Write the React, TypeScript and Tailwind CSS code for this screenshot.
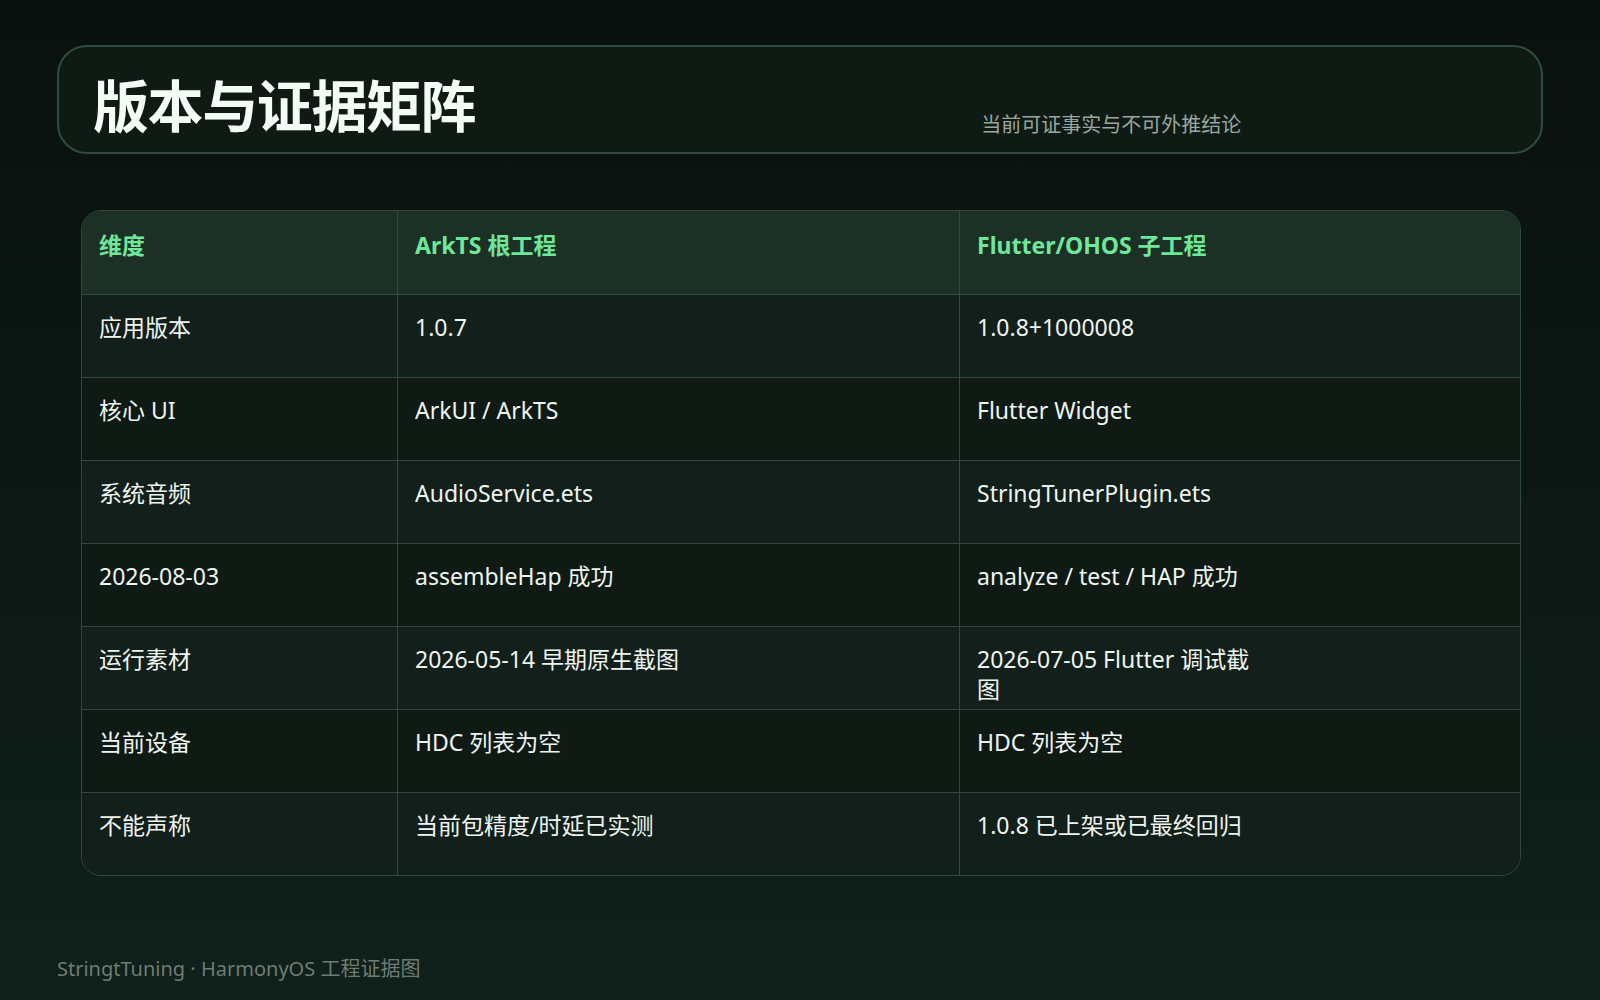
import React from "react";

const rows: [string, string, string][] = [
  ["应用版本", "1.0.7", "1.0.8+1000008"],
  ["核心 UI", "ArkUI / ArkTS", "Flutter Widget"],
  ["系统音频", "AudioService.ets", "StringTunerPlugin.ets"],
  ["2026-08-03", "assembleHap 成功", "analyze / test / HAP 成功"],
  ["运行素材", "2026-05-14 早期原生截图", "2026-07-05 Flutter 调试截图"],
  ["当前设备", "HDC 列表为空", "HDC 列表为空"],
  ["不能声称", "当前包精度/时延已实测", "1.0.8 已上架或已最终回归"],
];

export default function App() {
  return (
    <div
      className="w-[1600px] h-[1000px] flex flex-col bg-gradient-to-b from-[#09110e] to-[#10201a] text-[#eef5f0]"
      style={{ fontFamily: '"Noto Sans", "Noto Sans CJK SC", sans-serif' }}
    >
      <div className="mx-[57px] mt-[45px] h-[109px] rounded-[30px] border-2 border-[#2e4d3c] bg-[#0f1a15] flex items-start px-[34px]">
        <div className="text-[56px] font-bold leading-none mt-[30px] tracking-tight text-[#f2fbf5]">版本与证据矩阵</div>
        <div className="ml-[506px] mt-[68px] text-[20px] text-[#9aa79f] leading-none">当前可证事实与不可外推结论</div>
      </div>
      <div className="mx-[81px] mt-[56px] w-[1440px] rounded-[20px] border border-[#2f4a3a] overflow-hidden text-[23px]">
        <div className="grid grid-cols-[316px_562px_562px] h-[83px] bg-[#1d3026] text-[#6fe79a] font-bold">
          <div className="px-[17px] pt-[17px] border-r border-[#2f4a3a]">维度</div>
          <div className="px-[17px] pt-[17px] border-r border-[#2f4a3a]">ArkTS 根工程</div>
          <div className="px-[17px] pt-[17px]">Flutter/OHOS 子工程</div>
        </div>
        {rows.map((r, i) => (
          <div
            key={i}
            className={`grid grid-cols-[316px_562px_562px] h-[83px] border-t border-[#2f4a3a] ${i % 2 === 0 ? "bg-[#131f1a]" : "bg-gradient-to-b from-[#101a15] to-[#0f1a15]"}`}
          >
            <div className="px-[17px] pt-[17px] leading-[30px] border-r border-[#2f4a3a]">{r[0]}</div>
            <div className="px-[17px] pt-[17px] leading-[30px] border-r border-[#2f4a3a]">{r[1]}</div>
            <div className="px-[17px] pt-[17px] leading-[30px]"><div className="max-w-[282px]">{r[2]}</div></div>
          </div>
        ))}
      </div>
      <div className="mx-[57px] mt-auto mb-[16px] text-[20px] text-[#6e7c74]">StringtTuning · HarmonyOS 工程证据图</div>
    </div>
  );
}
